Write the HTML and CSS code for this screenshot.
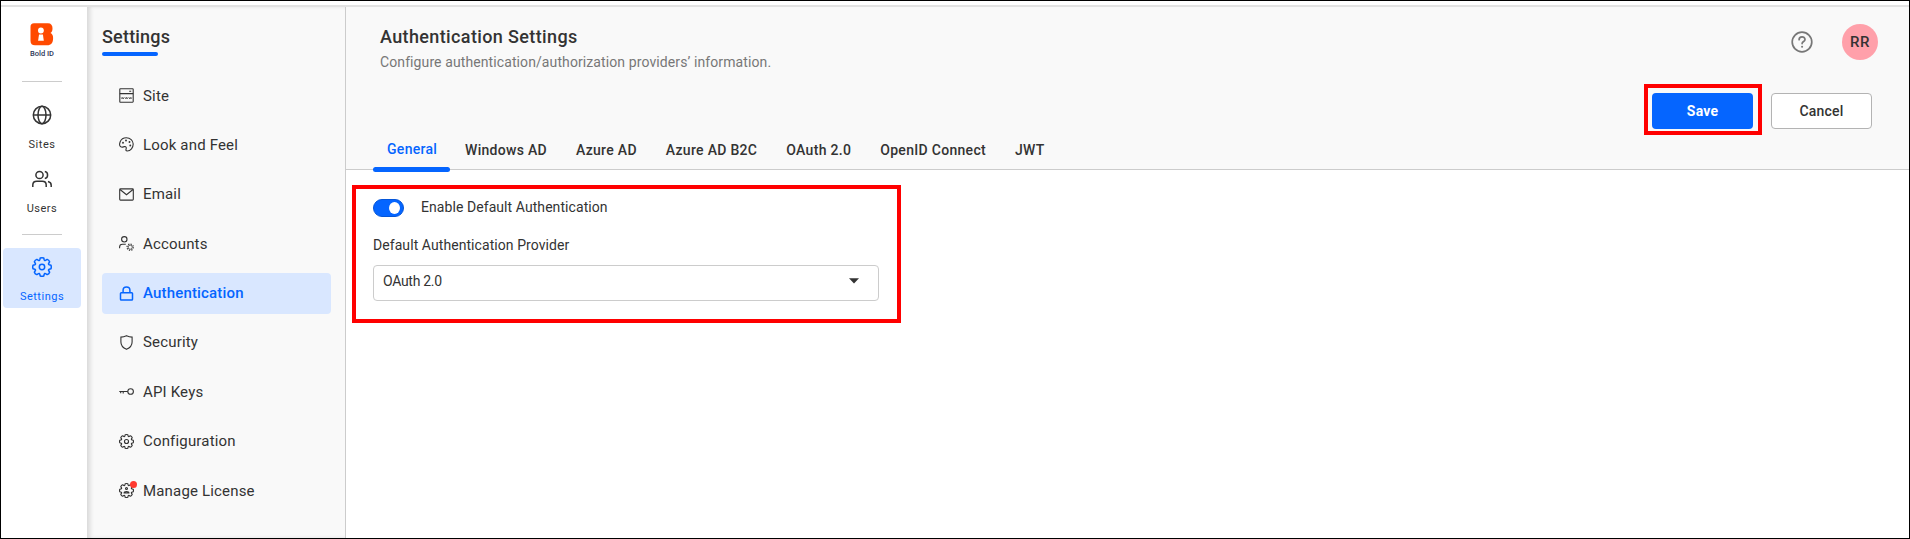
FILE: index.html
```
<!DOCTYPE html>
<html lang="en">
<head>
<meta charset="utf-8">
<title>Authentication Settings</title>
<link rel="stylesheet" href="styles.css">
</head>
<body>
<svg width="0" height="0" class="defs" aria-hidden="true">
  <symbol id="gear" viewBox="-10 -10 20 20" overflow="visible">
    <path stroke-linejoin="round" d="M-1.760-9.030Q0-9.600 1.760-9.030L2.200-7.200Q2.600-6.200 3.500-6.600L5.140-7.630Q6.900-7.200 7.630-5.140L6.600-3.500Q6.200-2.600 7.200-2.200L9.030-1.760Q9.600 0 9.030 1.760L7.200 2.200Q6.200 2.600 6.600 3.500L7.630 5.140Q6.900 7.200 5.140 7.630L3.500 6.600Q2.600 6.200 2.200 7.200L1.760 9.030Q0 9.600-1.760 9.030L-2.200 7.200Q-2.600 6.200-3.500 6.600L-5.140 7.630Q-6.900 7.200-7.630 5.140L-6.600 3.500Q-6.200 2.600-7.200 2.200L-9.030 1.760Q-9.600 0-9.030-1.760L-7.200-2.200Q-6.200-2.600-6.600-3.500L-7.630-5.140Q-6.900-7.200-5.140-7.630L-3.500-6.600Q-2.600-6.200-2.200-7.200Z"/>
  </symbol>
</svg>
<div class="frame">
  <div class="topstrip"></div>
  <div class="app">
    <nav class="rail">
      <div class="logo">
        <svg width="24" height="23" viewBox="0 0 24 23"><path d="M4 .3h14c3 0 4.500 2 4.500 5 0 2.500-.6 3.700-2 4.700 1.900 1 2.600 2.500 2.600 5 0 5-2 7.300-6 7.300H5c-3 0-4.500-1.500-4.500-4.500V4C.5 1.500 1.700.3 4 .3z" fill="#ff4a00"/><circle cx="10.900" cy="7.500" r="2.900" fill="#fff"/><path d="M9 11.500h3.900l.9 6.300H8.100z" fill="#fff"/></svg>
        <span class="logo-name">Bold ID</span>
      </div>
      <hr class="rail-line">
      <a class="rail-item sites">
        <svg class="ico" width="20" height="20" viewBox="0 0 20 20"><circle cx="10" cy="10" r="8.700"/><path d="M1.300 10h17.400"/><ellipse cx="10" cy="10" rx="4" ry="8.700"/></svg>
        <span>Sites</span>
      </a>
      <a class="rail-item users">
        <svg class="ico" width="20" height="20" viewBox="0 0 20 20"><circle cx="7.500" cy="6" r="3.600"/><path d="M.8 18v-2c0-2.400 1.600-3.700 4-3.700h5.400c2.400 0 4 1.300 4 3.700v2M12.800 2.500c3.700.5 3.700 6.500 0 7.100M16 12.500c2.200.6 3.200 1.900 3.200 3.700V18"/></svg>
        <span>Users</span>
      </a>
      <hr class="rail-line second">
      <a class="rail-item active">
        <svg class="ico" width="20" height="20" viewBox="0 0 20 20"><use href="#gear" width="20" height="20"/><circle cx="10" cy="10" r="2.700"/></svg>
        <span>Settings</span>
      </a>
    </nav>
    <aside class="side">
      <h2 class="side-title">Settings</h2>
      <div class="side-bar"></div>
      <ul class="menu">
        <li><svg class="ico thin" width="15" height="15" viewBox="0 0 15 15"><rect x=".8" y=".8" width="13.400" height="13.400" rx=".6"/><path d="M.8 5.600h13.400M10.200 3.200h2"/><path d="M2.300 9.500l.7 1.200.7-1.200.7 1.200.7-1.200M6.100 9.500l.7 1.200.7-1.200.7 1.200.7-1.200M9.900 9.500l.7 1.200.7-1.200.7 1.200.7-1.200" stroke-width=".9"/></svg><span>Site</span></li>
        <li><svg class="ico thin" width="15" height="15" viewBox="0 0 15 15"><path d="M7.300.8c3.900 0 6.900 2.600 6.900 6.300 0 3.600-2.500 6.900-6 6.900-1.500 0-1.500-1.200-1.100-2 .6-1.200-.1-2.700-1.600-2.400-1.500.3-2.300.9-3.700.2C-.5 8.300.6.8 7.300.8z"/><g class="dots"><circle cx="4" cy="5.700" r=".95"/><circle cx="7" cy="3.500" r=".95"/><circle cx="10.500" cy="5" r=".95"/><circle cx="11.300" cy="8.500" r=".95"/></g></svg><span>Look and Feel</span></li>
        <li><svg class="ico thin" width="15" height="15" viewBox="0 0 15 15"><rect x=".7" y="1.900" width="13.600" height="11.200" rx=".8"/><path d="M1 2.500l6.500 5.200L14 2.500"/></svg><span>Email</span></li>
        <li><svg class="ico thin" width="15" height="15" viewBox="0 0 15 15"><circle cx="5.300" cy="3.300" r="2.700"/><path d="M.6 12.300V11c0-1.900 1-2.800 2.900-2.800h3.300"/><circle cx="11.200" cy="11.200" r="2.100" stroke-width=".8"/><circle cx="11.200" cy="11.200" r="3.200" stroke-dasharray="1.257 1.257"/></svg><span>Accounts</span></li>
        <li class="active"><svg class="ico" width="15" height="15" viewBox="0 0 15 15"><rect x="1.500" y="6.700" width="12" height="7.300" rx=".8"/><path d="M4.100 6.600V4.100C4.100 2 5.500.9 7.500.9s3.400 1.100 3.400 3.200v2.500"/></svg><span>Authentication</span></li>
        <li><svg class="ico thin" width="15" height="15" viewBox="0 0 15 15"><path d="M7.500.7C5.700 1.500 3.800 2 1.900 2.100V7c0 3.300 2.200 5.900 5.600 7.300 3.400-1.400 5.600-4 5.600-7.300V2.100C11.200 2 9.300 1.500 7.500.7z"/></svg><span>Security</span></li>
        <li><svg class="ico thin" width="15" height="15" viewBox="0 0 15 15"><circle cx="11.600" cy="7.500" r="2.800"/><path d="M8.800 7.500H.3M1.700 7.500v1.700M4.200 7.500v2.100"/></svg><span>API Keys</span></li>
        <li><svg class="ico" width="15" height="15" viewBox="0 0 20 20"><use href="#gear" width="20" height="20"/><circle cx="10" cy="10" r="2.700"/></svg><span>Configuration</span></li>
        <li><span class="badged"><svg class="ico" width="15" height="15" viewBox="0 0 20 20"><use href="#gear" width="20" height="20"/><circle cx="10" cy="7.300" r="1.300"/><path d="M6.800 13.300c0-2.500 6.400-2.500 6.400 0z"/></svg><i class="dot"></i></span><span>Manage License</span></li>
      </ul>
    </aside>
    <main class="main">
      <header class="head">
        <div class="head-top">
          <div>
            <h1 class="title">Authentication Settings</h1>
            <p class="subtitle">Configure authentication/authorization providers’ information.</p>
          </div>
          <div class="tools">
            <svg width="22" height="22" viewBox="0 0 22 22" fill="none" stroke="#777" stroke-width="1.700"><circle cx="11" cy="11" r="9.800"/><path d="M8.100 8.700c0-3.700 5.900-3.700 5.900-.3 0 2.100-2.900 2-2.900 4.200" stroke-linecap="round"/><circle cx="11.100" cy="15.800" r="1.050" fill="#777" stroke="none"/></svg>
            <span class="avatar">RR</span>
          </div>
        </div>
        <div class="actions">
          <div class="mark mark-save"><button class="btn primary">Save</button></div>
          <button class="btn plain">Cancel</button>
        </div>
        <div class="tabs">
          <a class="tab on">General</a><a class="tab">Windows AD</a><a class="tab">Azure AD</a><a class="tab">Azure AD B2C</a><a class="tab">OAuth 2.0</a><a class="tab">OpenID Connect</a><a class="tab">JWT</a>
        </div>
      </header>
      <section class="mark panel">
        <div class="switch-row"><span class="switch"></span><span class="text">Enable Default Authentication</span></div>
        <div class="label text">Default Authentication Provider</div>
        <div class="select"><span>OAuth 2.0</span><svg width="10" height="6" viewBox="0 0 10 6"><path d="M0 .3h10L5 5.500z" fill="#333"/></svg></div>
      </section>
    </main>
  </div>
</div>
</body>
</html>
```
FILE: styles.css
```
* { box-sizing: border-box; }
body { margin: 0; font-family: Roboto, "Liberation Sans", sans-serif; color: #333; background: #fff; }
h1, h2, p, ul, hr { margin: 0; padding: 0; }
.defs { display: block; position: absolute; }
.frame { width: 1910px; height: 539px; border: 1px solid #000; display: flex; flex-direction: column; overflow: hidden; }
.topstrip { height: 6px; flex: none; border-bottom: 2px solid #e2e2e2; }
.app { flex: 1; display: flex; min-height: 0; }
.ico { fill: none; stroke: currentColor; stroke-width: 1.5; flex: none; display: block; overflow: visible; }
.thin { stroke-width: 1.1; }
.dots { fill: currentColor; stroke: none; }

.rail { width: 86px; flex: none; display: flex; flex-direction: column; align-items: center; padding: 16px 6px 0 2px; background: #fff; }
.logo { display: flex; flex-direction: column; align-items: center; height: 42px; }
.logo svg { display: block; }
.logo-name { font-size: 7.5px; line-height: 10px; margin-top: 3px; font-weight: 500; color: #2c3558; }
.rail-line { width: 40px; height: 1px; border: 0; background: #ccc; margin-top: 16px; flex: none; }
.rail-item { width: 78px; height: 60px; flex: none; display: flex; flex-direction: column; align-items: center; padding-top: 9px; border-radius: 4px; font-size: 11px; line-height: 14px; letter-spacing: .5px; }
.rail-item span { margin-top: 13px; }
.sites { margin-top: 14px; }
.users { margin-top: 5px; padding-top: 8px; }
.rail-line.second { margin-top: 13px; }
.rail-item.active { margin-top: 13px; background: #d9e7ff; color: #0565ff; }

.side { width: 259px; flex: none; background: #f9f9f9; border-right: 1px solid #ccc; padding: 18px 14px 0 15px; box-shadow: inset 4px 0 4px -1px #d8d8d8; }
.side-title { font-size: 18px; line-height: 24px; font-weight: 500; letter-spacing: .2px; }
.side-bar { width: 56px; height: 4px; border-radius: 2px; background: #0565ff; margin-top: 3px; }
.menu { list-style: none; display: flex; flex-direction: column; gap: 8.4px; margin-top: 19px; }
.menu li { height: 41px; display: flex; align-items: center; gap: 9.5px; padding-left: 16.5px; border-radius: 4px; font-size: 15px; letter-spacing: .17px; }
.menu li.active { background: #d9e7ff; color: #0565ff; font-weight: 500; }
.badged { position: relative; }
.dot { position: absolute; left: 11px; top: -2px; width: 7px; height: 7px; border-radius: 50%; background: #ff3a30; }

.main { flex: 1; min-width: 0; display: flex; flex-direction: column; align-items: flex-start; }
.head { width: 100%; height: 163px; flex: none; background: #f9f9f9; border-bottom: 1px solid #ccc; display: flex; flex-direction: column; }
.head-top { height: 77px; flex: none; display: flex; justify-content: space-between; padding: 17px 31px 0 34px; }
.title { font-size: 18px; line-height: 26px; font-weight: 500; letter-spacing: .37px; }
.subtitle { font-size: 14px; line-height: 20px; margin-top: 2px; color: #777; letter-spacing: .1px; }
.tools { display: flex; align-items: center; gap: 29px; height: 36px; }
.avatar { width: 36px; height: 36px; border-radius: 50%; background: #ffa0aa; display: flex; align-items: center; justify-content: center; font-size: 15px; font-weight: 500; letter-spacing: .5px; }
.actions { height: 51px; flex: none; display: flex; justify-content: flex-end; align-items: flex-start; gap: 9px; padding-right: 37px; }
.mark { border: 4px solid #f00; }
.mark-save { padding: 5px 5px 2px 4px; height: 51px; }
.btn { width: 101px; height: 36px; display: block; font: 500 14px/20px Roboto, sans-serif; border-radius: 4px; padding: 0; border: 0; letter-spacing: .2px; }
.primary { background: #0565ff; color: #fff; font-weight: 700; }
.plain { background: #fff; color: #333; border: 1px solid #b3b3b3; margin-top: 9px; }
.tabs { display: flex; gap: 1px; padding-left: 27px; height: 37px; flex: none; }
.tab { padding: 6px 14px 0; font-size: 14px; line-height: 18px; font-weight: 500; letter-spacing: .3px; white-space: nowrap; }
.tab.on { width: 77px; padding-right: 0; color: #0565ff; padding-top: 5px; display: flex; flex-direction: column; }
.tab.on::after { content: ""; height: 5px; margin: auto 0 0 -14px; border-radius: 2.500px; background: #0565ff; }

.panel { width: 549px; height: 138px; margin: 15px 0 0 6px; padding: 8px 17px; }
.text { font-size: 14px; line-height: 20px; letter-spacing: .07px; }
.switch-row { display: flex; gap: 17px; align-items: center; height: 20px; }
.switch { width: 31px; height: 18px; border-radius: 9px; background: #0565ff; border: 1px solid #0556d8; padding: 2px 3px; display: flex; justify-content: flex-end; margin-top: 2px; }
.switch::after { content: ""; width: 11px; height: 12px; border-radius: 50%; background: #fff; }
.label { margin-top: 18px; }
.select { width: 506px; height: 36px; margin-top: 10px; border: 1px solid #ccc; border-radius: 4px; display: flex; justify-content: space-between; align-items: center; padding: 0 19px 4px 9px; font-size: 14px; letter-spacing: -.3px; }
```
